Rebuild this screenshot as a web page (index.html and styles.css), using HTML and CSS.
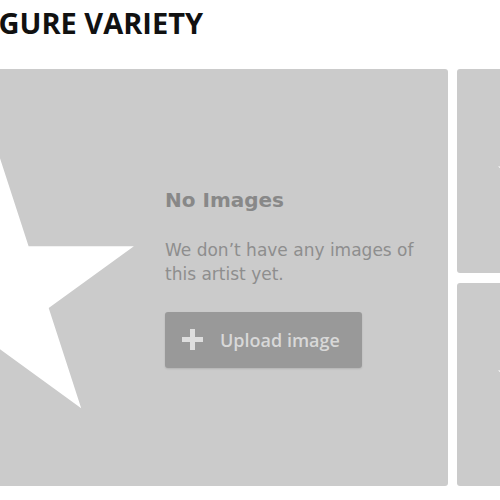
FILE: index.html
```html
<!DOCTYPE html>
<html>
<head>
    <meta charset="UTF-8">
    <title>Figure Variety</title>
    <link rel="stylesheet" href="styles.css">
</head>
<body>
    <div class="page">
        <h2 class="section-title">FIGURE VARIETY</h2>

        <div class="gallery">
            <div class="tile tile-main">
                <svg class="placeholder-star" width="164" height="417" viewBox="0 0 164 417">
                    <polygon points="26,77 58.6,177.2 163.9,177.2 78.7,239.1 111.2,339.3 26,277.4 -59.2,339.3 -26.7,239.1 -111.9,177.2 -6.6,177.2"/>
                </svg>
                <div class="empty-state">
                    <h3>No Images</h3>
                    <p>We don’t have any images of this artist yet.</p>
                    <button class="upload-btn">
                        <svg width="21" height="21" viewBox="0 0 21 21">
                            <path d="M8 0h5v21h-5z M0 8h21v5h-21z"/>
                        </svg>
                        <span>Upload image</span>
                    </button>
                </div>
            </div>
            <div class="tile tile-small">
                <svg class="small-star" width="200" height="204" viewBox="0 0 200 204">
                    <polygon points="98,56.5 111.4,97.5 155,97.5 119.8,122.9 133.3,164 98,138.6 62.7,164 76.2,122.9 41,97.5 84.6,97.5"/>
                </svg>
            </div>
            <div class="tile tile-small">
                <svg class="small-star" width="200" height="204" viewBox="0 0 200 204">
                    <polygon points="98,46.5 111.4,87.5 155,87.5 119.8,112.9 133.3,154 98,128.6 62.7,154 76.2,112.9 41,87.5 84.6,87.5"/>
                </svg>
            </div>
        </div>
    </div>
</body>
</html>
```

FILE: styles.css
```css
* {
    margin: 0;
    padding: 0;
    box-sizing: border-box;
}

html, body {
    overflow: hidden;
    background: #fff;
}

.page {
    margin-left: -30px;
    padding-top: 3px;
    width: 700px;
}

.section-title {
    font-family: 'Open Sans', 'DejaVu Sans', sans-serif;
    font-weight: 700;
    font-size: 29px;
    line-height: 40px;
    color: #111;
    padding-left: 3px;
    margin-bottom: 26px;
}

.gallery {
    display: grid;
    grid-template-columns: 478px 200px;
    grid-template-rows: 204px 203px;
    column-gap: 9px;
    row-gap: 10px;
}

.tile {
    background: #cbcbcb;
    border-radius: 3px;
    overflow: hidden;
}

.tile-main {
    grid-row: span 2;
    display: flex;
    align-items: center;
    position: relative;
}

.placeholder-star {
    flex: none;
    align-self: flex-start;
    fill: #fff;
}

.small-star {
    display: block;
    fill: #fff;
}

.empty-state {
    margin-left: 31px;
    width: 270px;
    font-family: 'DejaVu Sans', sans-serif;
    color: #8e8e8e;
}

.empty-state h3 {
    font-size: 20px;
    font-weight: 700;
    line-height: 24px;
    color: #888;
    margin-bottom: 26px;
}

.empty-state p {
    font-size: 17px;
    line-height: 24px;
    margin-bottom: 26px;
}

.upload-btn {
    display: flex;
    align-items: center;
    gap: 17px;
    width: 197px;
    height: 56px;
    padding: 0 20px 0 17px;
    border: none;
    border-radius: 3px;
    background: #999;
    box-shadow: 0 1px 2px rgba(0,0,0,0.12);
    color: #d8d8d8;
    font-family: 'Open Sans', 'DejaVu Sans', sans-serif;
    font-weight: 600;
    font-size: 18px;
    cursor: pointer;
}

.upload-btn svg {
    flex: none;
    fill: #dedede;
}
```
